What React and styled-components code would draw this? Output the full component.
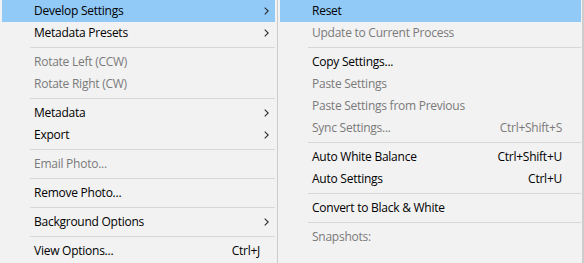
import React from 'react';
import styled, { createGlobalStyle } from 'styled-components';

// Two cascading context menus: the main photo menu and its Develop Settings submenu.

const leftItems = [
  { label: 'Develop Settings', sub: true, active: true },
  { label: 'Metadata Presets', sub: true },
  { sep: true },
  { label: 'Rotate Left (CCW)', disabled: true },
  { label: 'Rotate Right (CW)', disabled: true },
  { sep: true },
  { label: 'Metadata', sub: true },
  { label: 'Export', sub: true },
  { sep: true },
  { label: 'Email Photo...', disabled: true },
  { sep: true },
  { label: 'Remove Photo...' },
  { sep: true },
  { label: 'Background Options', sub: true },
  { sep: true },
  { label: 'View Options...', key: 'Ctrl+J' },
];

const rightItems = [
  { label: 'Reset', active: true },
  { label: 'Update to Current Process', disabled: true },
  { sep: true },
  { label: 'Copy Settings...' },
  { label: 'Paste Settings', disabled: true },
  { label: 'Paste Settings from Previous', disabled: true },
  { label: 'Sync Settings...', key: 'Ctrl+Shift+S', disabled: true },
  { sep: true },
  { label: 'Auto White Balance', key: 'Ctrl+Shift+U' },
  { label: 'Auto Settings', key: 'Ctrl+U' },
  { sep: true },
  { label: 'Convert to Black & White' },
  { sep: true },
  { label: 'Snapshots:', disabled: true },
];

const Chevron = () => (
  <svg width="5" height="8" viewBox="0 0 5 8">
    <path d="M0.7 0.6 L4.2 4 L0.7 7.4" fill="none" stroke="#2b2b2b" strokeWidth="1.1" />
  </svg>
);

const Menu = ({ items, width, keyPad }) => (
  <MenuPanel $width={width}>
    {items.map((it, i) =>
      it.sep ? (
        <Separator key={i} />
      ) : (
        <Item key={i} $active={it.active} $disabled={it.disabled} $keyPad={keyPad}>
          <Label>{it.label}</Label>
          {it.key && <Shortcut>{it.key}</Shortcut>}
          {it.sub && (
            <Arrow>
              <Chevron />
            </Arrow>
          )}
        </Item>
      )
    )}
  </MenuPanel>
);

const App = () => {
  return (
    <>
      <GlobalStyle />
      <Page>
        <Menu items={leftItems} width={278} keyPad={15} />
        <Menu items={rightItems} width={306} keyPad={19} />
      </Page>
    </>
  );
};

export default App;

const GlobalStyle = createGlobalStyle`
  html, body {
    margin: 0;
    padding: 0;
    background: #f2f2f2;
  }
  body {
    font-family: "Open Sans", "Noto Sans", "Liberation Sans", sans-serif;
  }
`;

const Page = styled.div`
  display: flex;
  width: 584px;
  height: 263px;
  overflow: hidden;
  background: #f2f2f2;
`;

const MenuPanel = styled.div`
  display: flex;
  flex-direction: column;
  box-sizing: border-box;
  width: ${(p) => p.$width}px;
  height: 263px;
  padding: 0 2px 0 2px;
  border-right: 1px solid #cccccc;
  &:last-child {
    border-right: 2px solid #cdcdcd;
    padding-right: 1px;
  }
`;

const Item = styled.div`
  display: flex;
  align-items: center;
  height: 22px;
  flex-shrink: 0;
  padding: 0 ${(p) => p.$keyPad}px 0 32px;
  background: ${(p) => (p.$active ? '#91c9f7' : 'transparent')};
  color: ${(p) => (p.$disabled ? '#7a7a7a' : '#000')};
  font-size: 12px;
  letter-spacing: -0.25px;
  white-space: nowrap;
`;

const Label = styled.span`
  flex: 1;
  line-height: 22px;
  margin-top: -1px;
`;

const Shortcut = styled.span`
  line-height: 22px;
  margin-top: -1px;
`;

const Arrow = styled.span`
  display: flex;
  align-items: center;
  margin-right: -9px;
`;

const Separator = styled.div`
  height: 7px;
  flex-shrink: 0;
  margin-left: 28px;
  position: relative;
  &::after {
    content: '';
    display: block;
    margin-top: 3px;
    height: 1px;
    background: #d7d7d7;
  }
`;
